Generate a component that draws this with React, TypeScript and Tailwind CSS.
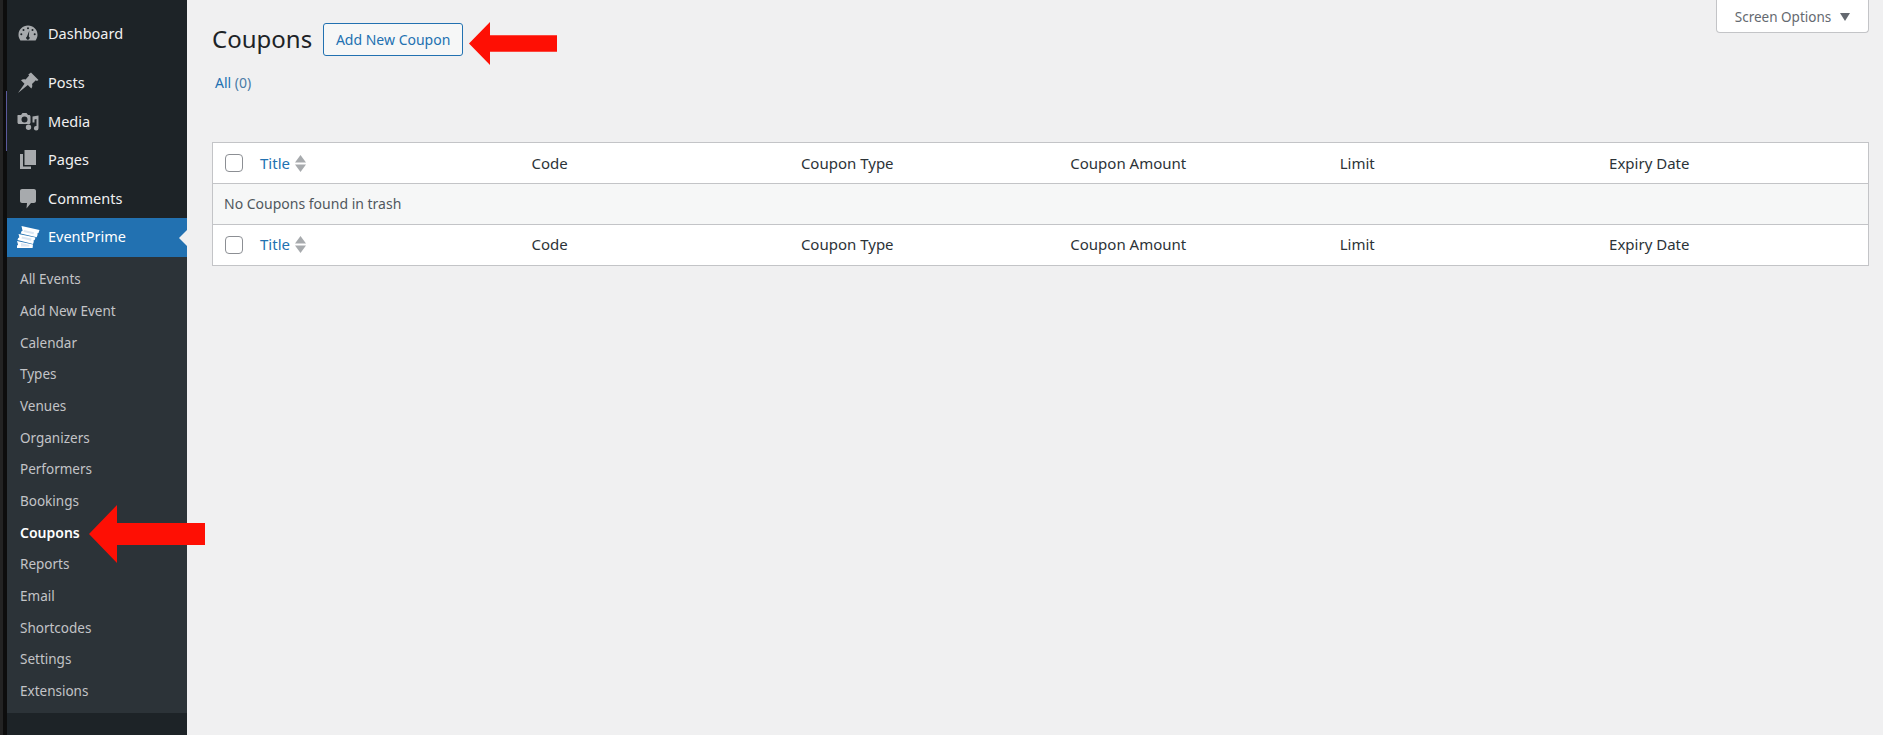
import React from 'react';

const font = "font-['Noto_Sans',sans-serif]";

const DashboardIcon = () => (
  <svg width="20" height="20" viewBox="0 0 20 20" fill="#a7aaad">
    <path fillRule="evenodd" d="M10 1.500c-5.200 0-9.500 4-9.500 9.200 0 1.700.4 3 1.100 4.300l.8 1.500h15.200l.8-1.500c.7-1.300 1.100-2.600 1.100-4.300 0-5.200-4.300-9.200-9.500-9.200zM10 3.200a1 1 0 1 1 0 2 1 1 0 0 1 0-2zM5.500 5a1 1 0 1 1 0 2 1 1 0 0 1 0-2zM14.500 5a1 1 0 1 1 0 2 1 1 0 0 1 0-2zM3.300 9.300a1 1 0 1 1 0 2 1 1 0 0 1 0-2zM16.700 9.300a1 1 0 1 1 0 2 1 1 0 0 1 0-2zM11.300 6.500l-.5 5.900a1.800 1.800 0 1 1-1.800 0z" />
  </svg>
);

const PinIcon = () => (
  <svg width="22" height="22" viewBox="0 0 22 22" fill="#a7aaad">
    <path d="M14 .5l7.500 7.500-1.600 1-1.100-.7-3.800 3.600c.6 1.800.3 3.300-.7 4.600l-3.500-3.500L1 21l6.500-9.300L4 8.200c1.200-1 2.800-1.300 4.600-.7l3.500-3.900-.8-1.200z" />
  </svg>
);

const MediaIcon = () => (
  <svg width="22" height="22" viewBox="0 0 22 22" fill="#a7aaad">
    <path fillRule="evenodd" d="M1.500 4h2.500l1.500-2h4l1.500 2h1c.8 0 1.500.7 1.500 1.500v6c0 .8-.7 1.500-1.500 1.500h-10c-.8 0-1.500-.7-1.500-1.500v-6C0 4.700.7 4 1.500 4zM7.500 5.500a3 3 0 1 0 0 6 3 3 0 0 0 0-6z" />
    <path d="M15.500 5.500l6-1v12.700a2.300 2.300 0 1 1-2-2.200V8l-2 .4v3.100h-2zM11.500 13.500a2.700 2.700 0 1 1 0 5.400 2.700 2.700 0 0 1 0-5.400z" />
  </svg>
);

const PagesIcon = () => (
  <svg width="20" height="20" viewBox="0 0 20 20" fill="#a7aaad">
    <path d="M6.500 0H18v15H6.500z" />
    <path d="M2 4h3v12.500h8V19H2z" />
  </svg>
);

const CommentsIcon = () => (
  <svg width="20" height="20" viewBox="0 0 20 20" fill="#a7aaad">
    <path d="M4 0h12c1.100 0 2 .9 2 2v10c0 1.100-.9 2-2 2h-3l-4.500 5.500.5-5.500H4c-1.100 0-2-.9-2-2V2c0-1.100.9-2 2-2z" />
  </svg>
);

const TicketsIcon = () => (
  <svg width="24" height="24" viewBox="0 0 24 24" fill="#fff">
    <path d="M5.500 1l18 4-1 3-1.200.4.300 1.400-.9 2.500-16-3.800.8-2.200 1.100-.5-.4-1.500z" />
    <path d="M2.500 9l17 3.500-.8 2.500-1.200.6.300 1.200-.8 2.200L1.500 15l.7-2 1.100-.6-.2-1.300z" />
    <path d="M1 16l16 3.500-.4 3.500H1v-2.400l1-.6-.2-1.300z" />
    <path fill="#dbe6f2" d="M8 5l10 2.200-.5 2L7.500 7zM6 11.500l9.500 2-.5 2.300-9.500-2.200zM5 18l8.500 2-.3 1.600H5z" />
  </svg>
);

const topItems = [
  { label: 'Posts', icon: <PinIcon /> },
  { label: 'Media', icon: <MediaIcon /> },
  { label: 'Pages', icon: <PagesIcon /> },
  { label: 'Comments', icon: <CommentsIcon /> },
];

const subItems = [
  'All Events',
  'Add New Event',
  'Calendar',
  'Types',
  'Venues',
  'Organizers',
  'Performers',
  'Bookings',
  'Coupons',
  'Reports',
  'Email',
  'Shortcodes',
  'Settings',
  'Extensions',
];

const columns = ['Code', 'Coupon Type', 'Coupon Amount', 'Limit', 'Expiry Date'];

const MenuRow = ({ label, icon }: { label: string; icon: React.ReactNode }) => (
  <div className="flex h-[38.500px] items-center">
    <div className="flex w-[41px] shrink-0 justify-center">{icon}</div>
    <span className="text-[14.500px] text-[#f0f0f1]">{label}</span>
  </div>
);

const HeaderRow = ({ className }: { className: string }) => (
  <div className={`flex items-center bg-white ${className}`}>
    <div className="w-[47px] shrink-0 pl-[12px]">
      <div className="h-[18px] w-[18px] rounded-[4px] border border-[#8c8f94] bg-white" />
    </div>
    <div className="flex w-[271.500px] shrink-0 items-center gap-[5px]">
      <span className="text-[15px] text-[#2271b1]">Title</span>
      <svg width="11" height="17" viewBox="0 0 11 17" fill="#a7aaad">
        <path d="M5.500 0L11 7.500H0z" />
        <path d="M0 9.500h11L5.500 17z" />
      </svg>
    </div>
    {columns.map((c) => (
      <div key={c} className="w-[269.400px] shrink-0 text-[15px] text-[#2c3338]">
        {c}
      </div>
    ))}
  </div>
);

const Arrow = ({ className, width, height, head }: { className: string; width: number; height: number; head: number }) => (
  <svg className={className} width={width} height={height} viewBox={`0 0 ${width} ${height}`}>
    <polygon
      fill="#fe0f04"
      points={`0,${height / 2} ${head},0 ${head},${height * 0.31} ${width},${height * 0.31} ${width},${height * 0.69} ${head},${height * 0.69} ${head},${height} `}
    />
  </svg>
);

export default function App() {
  return (
    <div className={`relative flex h-[735px] w-full overflow-hidden bg-[#f0f0f1] ${font}`}>
      {/* Sidebar */}
      <div className="flex w-[187px] shrink-0 bg-[#1d2327]">
        <div className="h-full w-[3px] shrink-0 bg-[#232323]" />
        <div className="relative h-full w-[4px] shrink-0 bg-[#0d0d0d]">
          <div className="absolute top-[91px] right-0 h-[60px] w-px bg-[#5b5a9c]" />
        </div>
        <div className="min-w-0 flex-1">
          <div className="pt-[15px]">
            <MenuRow label="Dashboard" icon={<DashboardIcon />} />
          </div>
          <div className="mt-[10.500px]">
            {topItems.map((item) => (
              <MenuRow key={item.label} label={item.label} icon={item.icon} />
            ))}
          </div>
          <div className="relative flex h-[38.500px] items-center bg-[#2271b1]">
            <div className="flex w-[41px] shrink-0 justify-center">
              <TicketsIcon />
            </div>
            <span className="text-[14.500px] text-white">EventPrime</span>
            <div className="absolute top-[12px] right-0 h-0 w-0 border-y-[8px] border-r-[8px] border-y-transparent border-r-[#f0f0f1]" />
          </div>
          <div className="bg-[#2c3338] pt-[7px] pb-[6px] pl-[13px]">
            {subItems.map((s) => (
              <div
                key={s}
                className={`flex h-[31.700px] items-center ${
                  s === 'Coupons' ? 'text-[14px] font-semibold text-white' : 'text-[13.500px] text-[#c3c4c7]'
                }`}
              >
                {s}
              </div>
            ))}
          </div>
        </div>
      </div>

      {/* Main */}
      <div className="min-w-0 flex-1 pr-[14px] pl-[25px]">
        <div className="float-right flex h-[33px] w-[153px] items-center justify-center gap-[9px] rounded-b-[4px] border border-t-0 border-[#c3c4c7] bg-white pt-[2px]">
          <span className="text-[13.500px] text-[#646970]">Screen Options</span>
          <svg width="10" height="8" viewBox="0 0 10 8" fill="#646970">
            <path d="M0 0h10L5 8z" />
          </svg>
        </div>
        <div className="flex items-start gap-[11px] pt-[23px]">
          <h1 className="text-[24px] leading-[31px] text-[#1d2327]">Coupons</h1>
          <div className="flex h-[33px] w-[140px] items-center justify-center rounded-[3px] border border-[#2271b1] bg-[#f6f7f7] pb-[1px] text-[14px] text-[#2271b1]">
            Add New Coupon
          </div>
        </div>
        <div className="mt-[17px] pl-[3px] text-[14px] leading-[20px] text-[#2271b1]">
          All <span className="text-[#4a7ba6]">(0)</span>
        </div>
        <div className="mt-[49px] border border-[#c3c4c7]">
          <HeaderRow className="h-[41px] border-b border-[#c3c4c7]" />
          <div className="flex h-[41px] items-center border-b border-[#c3c4c7] bg-[#f6f7f7] pb-[1px] pl-[11px] text-[14px] text-[#50575e]">
            No Coupons found in trash
          </div>
          <HeaderRow className="h-[40px] pb-[1px]" />
        </div>
      </div>

      {/* Annotation arrows */}
      <Arrow className="absolute top-[505px] left-[89px]" width={116} height={58} head={28} />
      <Arrow className="absolute top-[22px] left-[469px]" width={88} height={43} head={21} />
    </div>
  );
}
